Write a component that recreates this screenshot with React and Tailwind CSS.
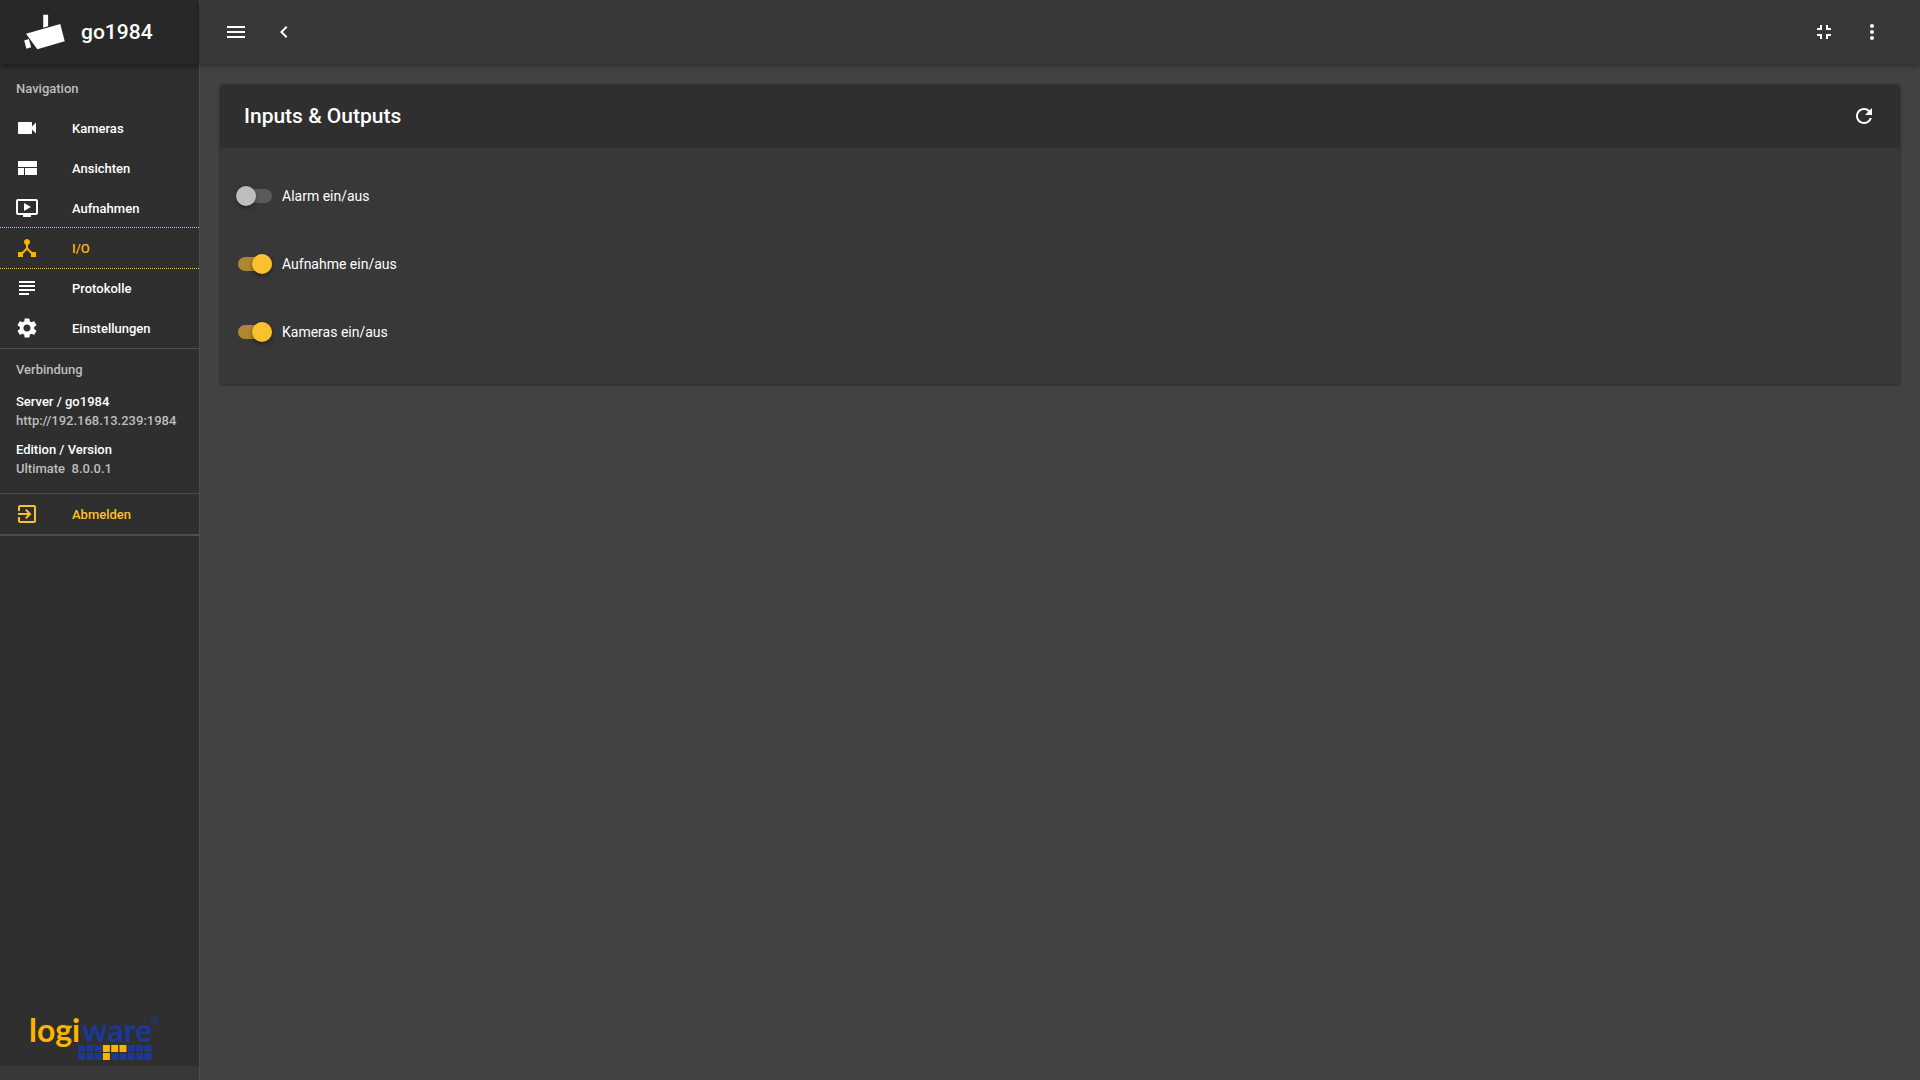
import React, { useState } from 'react';
import {
    MdChevronLeft,
    MdDeviceHub,
    MdExitToApp,
    MdFullscreenExit,
    MdMenu,
    MdMoreVert,
    MdOndemandVideo,
    MdRefresh,
    MdSettings,
    MdSubject,
    MdVideocam,
} from 'react-icons/md';

const ViewCompactIcon = ({ size = 24 }) => (
    <svg width={size} height={size} viewBox="0 0 24 24" fill="currentColor" aria-hidden="true">
        <path d="M3 19h6v-7H3v7zm7 0h12v-7H10v7zM3 5v6h19V5H3z" />
    </svg>
);

const CameraLogo = () => (
    <svg width="42" height="36" viewBox="24 14 42 36" fill="#fff" aria-hidden="true">
        <path d="M43.2 14.7h4.9v11.6l-4.9 1.4z" />
        <path d="M26 33.7L60.3 24l4.4 17.2-27.4 8.1z" />
        <path d="M24.2 40.4l4.6-1.4 2.4 8.2-4.8 1.5z" />
    </svg>
);

const LogiwareLogo = () => {
    const cells = [0, 1, 2, 3, 4, 5, 6, 7, 8];
    return (
        <svg width="140" height="60" viewBox="0 0 140 60" role="img" aria-label="logiware">
            <text x="0" y="36" fontFamily="Lato, sans-serif" fontSize="32" fontWeight="700" fill="#fab500">
                logi
            </text>
            <text x="53" y="36" fontFamily="Lato, sans-serif" fontSize="32" fontWeight="700" fill="#1b3797">
                ware
            </text>
            <text x="122" y="19" fontFamily='"Open Sans", sans-serif' fontSize="10" fill="#1b3797">®</text>
            {cells.map((c) => (
                <g key={c}>
                    <rect x={49 + c * 8.3} y="39" width="7" height="7" fill={c > 2 && c < 6 ? '#fab500' : '#1b3797'} />
                    <rect x={49 + c * 8.3} y="47" width="7" height="7" fill={c === 3 ? '#fab500' : '#1b3797'} />
                </g>
            ))}
        </svg>
    );
};

const navItems = [
    { label: 'Kameras', icon: MdVideocam },
    { label: 'Ansichten', icon: ViewCompactIcon },
    { label: 'Aufnahmen', icon: MdOndemandVideo },
    { label: 'I/O', icon: MdDeviceHub, active: true },
    { label: 'Protokolle', icon: MdSubject },
    { label: 'Einstellungen', icon: MdSettings },
];

const NavItem = ({ label, icon: Icon, active }) => (
    <a
        href="#"
        aria-current={active ? 'page' : undefined}
        className={
            active
                ? '-my-px flex h-[42px] items-center gap-[33px] border-y border-dotted border-[#fbc02d] pl-[15px] text-[#ffb300]'
                : 'flex h-10 items-center gap-[33px] pl-[15px] text-white'
        }
    >
        <Icon size={24} />
        <span className="pt-0.5">{label}</span>
    </a>
);

const IconButton = ({ label, icon: Icon }) => (
    <button type="button" aria-label={label} className="flex size-12 items-center justify-center">
        <Icon size={24} />
    </button>
);

const Toggle = ({ label, defaultOn }) => {
    const [on, setOn] = useState(defaultOn);
    return (
        <label className="flex h-[68px] cursor-pointer items-center gap-2.5 text-sm">
            <span className="flex h-5 w-9 items-center">
                <input
                    type="checkbox"
                    role="switch"
                    checked={on}
                    onChange={(e) => setOn(e.target.checked)}
                    className="peer sr-only"
                />
                <span className="ml-0.5 flex h-3.5 w-[34px] items-center rounded-full bg-[#5b5b5b] peer-checked:justify-end peer-checked:bg-[#ae8731] peer-checked:*:ml-0 peer-checked:*:bg-[#fbc02d]">
                    <span className="-ml-0.5 size-5 rounded-full bg-[#bdbdbd] shadow-[0_2px_4px_rgba(0,0,0,0.4)]"></span>
                </span>
            </span>
            {label}
        </label>
    );
};

const Sidebar = () => (
    <aside className="flex w-[200px] shrink-0 flex-col border-r border-[#4d4d4d] bg-[#2f2f2f] text-[13px] font-medium">
        <div className="flex h-16 shrink-0 items-center gap-[15px] bg-[#282828] pl-6 text-[21px] leading-8 shadow-[0_2px_6px_rgba(0,0,0,0.5)]">
            <CameraLogo />
            go1984
        </div>

        <nav>
            <h2 className="px-4 pt-[15px] pb-[9px] leading-5 text-[#bdbdbd]">Navigation</h2>
            {navItems.map((item) => (
                <NavItem key={item.label} {...item} />
            ))}
        </nav>

        <section className="border-y border-[#4d4d4d] px-4 pt-[11px] pb-[15px] leading-[19px] text-[#bdbdbd]">
            <h2 className="mb-[13px]">Verbindung</h2>
            <div className="mb-2.5">
                <p className="text-white">Server / go1984</p>
                <p>http://192.168.13.239:1984</p>
            </div>
            <div>
                <p className="text-white">Edition / Version</p>
                <p className="whitespace-pre">Ultimate  8.0.0.1</p>
            </div>
        </section>

        <a
            href="#"
            className="flex h-[42px] items-center gap-[33px] border-b-2 border-[#4d4d4d] pl-[15px] text-[#fbc02d]"
        >
            <MdExitToApp size={24} />
            <span className="pt-0.5">Abmelden</span>
        </a>

        <div className="mt-auto pl-[29px]">
            <LogiwareLogo />
        </div>
        <div className="h-3.5 bg-[#383838]"></div>
    </aside>
);

const App = () => {
    return (
        <div className="flex min-h-screen bg-[#424242] font-['Roboto',sans-serif] text-white">
            <Sidebar />

            <div className="flex min-w-0 flex-1 flex-col">
                <header className="flex h-16 items-center justify-between bg-[#383838] pr-6 pl-3 shadow-[0_2px_5px_rgba(0,0,0,0.3)]">
                    <div className="flex">
                        <IconButton label="Menü" icon={MdMenu} />
                        <IconButton label="Zurück" icon={MdChevronLeft} />
                    </div>
                    <div className="flex">
                        <IconButton label="Vollbild beenden" icon={MdFullscreenExit} />
                        <IconButton label="Mehr" icon={MdMoreVert} />
                    </div>
                </header>

                <main className="p-5">
                    <section className="rounded-sm bg-[#383838] shadow-[0_1px_3px_rgba(0,0,0,0.4)]">
                        <div className="flex h-16 items-center justify-between rounded-t-sm bg-[#2f2f2f] pr-3 pl-6">
                            <h1 className="text-[21px] leading-8 font-medium">Inputs & Outputs</h1>
                            <IconButton label="Aktualisieren" icon={MdRefresh} />
                        </div>
                        <div className="flex flex-col items-start px-4 pt-3.5 pb-[18px]">
                            <Toggle label="Alarm ein/aus" defaultOn={false} />
                            <Toggle label="Aufnahme ein/aus" defaultOn={true} />
                            <Toggle label="Kameras ein/aus" defaultOn={true} />
                        </div>
                    </section>
                </main>
            </div>
        </div>
    );
};

export default App;
